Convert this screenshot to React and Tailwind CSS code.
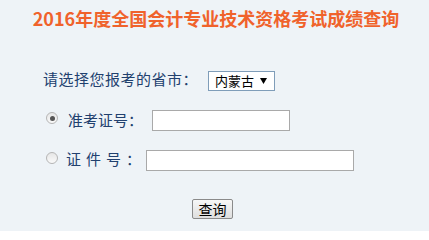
export default function App() {
  const font = { fontFamily: '"Microsoft YaHei", "Noto Sans CJK SC", "Noto Sans", sans-serif' };
  return (
    <div className="w-[429px] h-[231px] bg-[#eef3f7] overflow-hidden" style={font}>
      <div className="pt-[6px] text-center text-[18px] leading-[24px] font-bold text-[#f0622b] pl-[3px]">
        2016年度全国会计专业技术资格考试成绩查询
      </div>
      <div className="pt-[41px] pl-[43px] text-[15px] text-[#21406e]">
        <div className="flex items-center h-[20px]">
          <span className="leading-[20px] -mt-[5px] tracking-[0.5px]">请选择您报考的省市：</span>
          <div className="ml-[10px] w-[67px] h-[20px] border border-[#7f9db9] bg-white flex items-center justify-between pl-[6px] pr-[6px] text-[13px] text-black">
            <span>内蒙古</span>
            <svg width="7" height="6" viewBox="0 0 7 6" className="mr-[1px]">
              <polygon points="0,0 7,0 3.5,6" fill="#000" />
            </svg>
          </div>
        </div>
        <div className="flex items-center h-[21px] mt-[19px] ml-[3px]">
          <span className="mb-[5px] w-[12px] h-[12px] rounded-full border border-[#b5b5b5] bg-gradient-to-b from-[#e6e6e6] to-[#fafafa] flex items-center justify-center">
            <span className="w-[5px] h-[5px] rounded-full bg-[#555]"></span>
          </span>
          <span className="ml-[10px] leading-[20px] -mt-[2px]">准考证号：</span>
          <div className="ml-[9px] w-[138px] h-[21px] border border-[#a9a9a9] bg-white"></div>
        </div>
        <div className="flex items-center h-[21px] mt-[19px] ml-[3px]">
          <span className="mb-[6px] w-[12px] h-[12px] rounded-full border border-[#b5b5b5] bg-gradient-to-b from-[#e6e6e6] to-[#fafafa]"></span>
          <span className="ml-[8px] leading-[20px] -mt-[4px] tracking-[5px]">证件号：</span>
          <div className="ml-[0px] w-[208px] h-[21px] border border-[#a9a9a9] bg-white"></div>
        </div>
      </div>
      <div className="flex justify-center mt-[28px] pr-[4px]">
        <button className="w-[41px] h-[20px] border border-[#8a8a8a] rounded-[2px] bg-gradient-to-b from-[#f7f7f7] to-[#dedede] text-[14px] leading-[18px] text-black">
          查询
        </button>
      </div>
    </div>
  );
}
